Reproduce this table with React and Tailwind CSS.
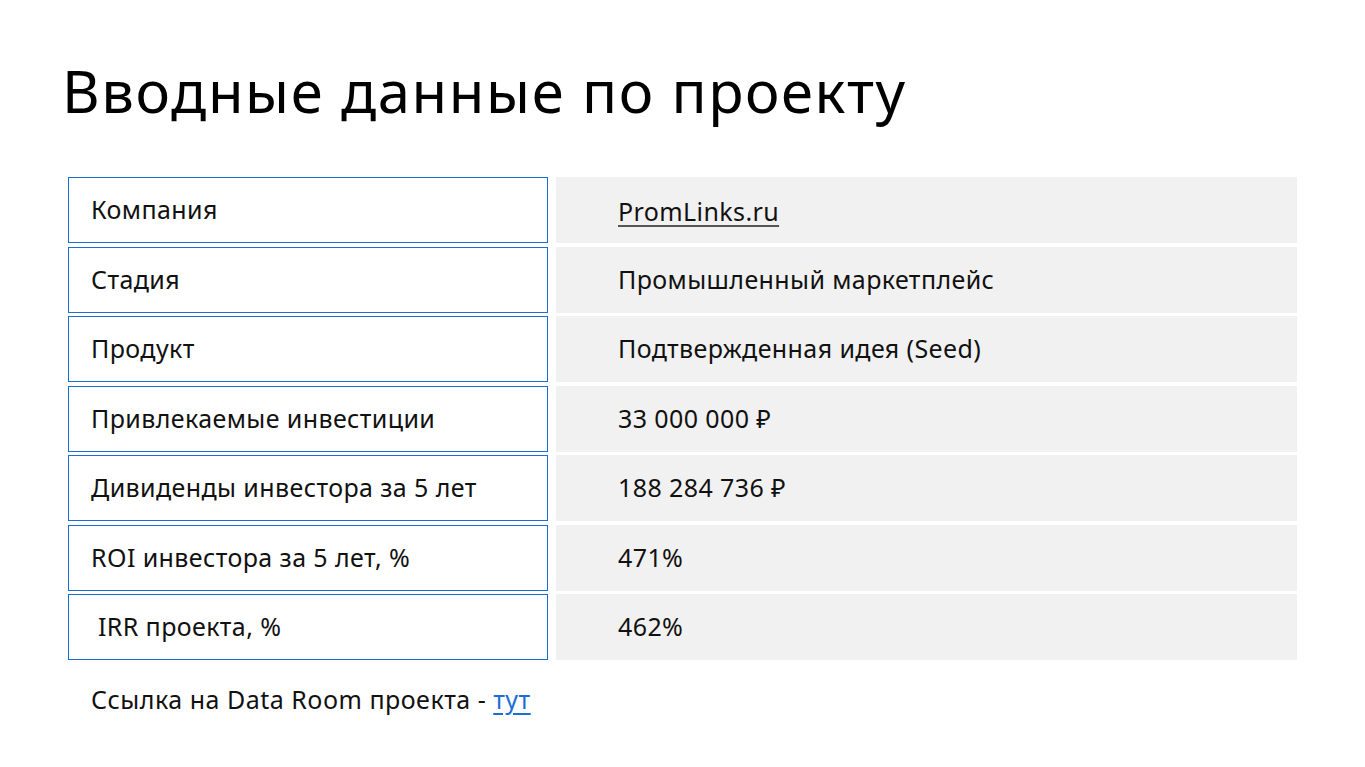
import React from 'react'

const rows = [
  { label: 'Компания', value: 'PromLinks.ru', link: true },
  { label: 'Стадия', value: 'Промышленный маркетплейс' },
  { label: 'Продукт', value: 'Подтвержденная идея (Seed)' },
  { label: 'Привлекаемые инвестиции', value: '33 000 000 ₽' },
  { label: 'Дивиденды инвестора за 5 лет', value: '188 284 736 ₽' },
  { label: 'ROI инвестора за 5 лет, %', value: '471%' },
  { label: '\u00a0IRR проекта, %', value: '462%' }
]

export default function App() {
  return (
    <div className="min-h-screen w-full bg-white text-[#111] font-['Noto_Sans','Lato',sans-serif]">
      <div className="pl-[62px] pt-[55px]">
        <h1 className="text-[58px] leading-[72px] font-normal tracking-[1.6px] text-black">Вводные данные по проекту</h1>
      </div>

      <div className="mt-[50px] ml-[68px] w-[1229px] flex flex-col gap-[3.5px] tracking-[0.4px]">
        {rows.map((r) => (
          <div key={r.label} className="flex gap-[8px] h-[66px]">
            <div className="w-[480px] border border-[#1c6cd2] flex items-center pl-[22px] text-[25px]">
              {r.label}
            </div>
            <div className="flex-1 bg-[#f1f1f1] flex items-center pl-[62px] text-[25px]">
              {r.link ? (
                <a href="#" className="underline decoration-[#555] underline-offset-[4px] pt-[3px]">{r.value}</a>
              ) : (
                r.value
              )}
            </div>
          </div>
        ))}
      </div>

      <div className="ml-[91px] mt-[21px] text-[25px] tracking-[0.5px]">
        Ссылка на Data Room проекта - <a href="#" className="text-[#1a6fd6] underline underline-offset-[4px]">тут</a>
      </div>
    </div>
  )
}
